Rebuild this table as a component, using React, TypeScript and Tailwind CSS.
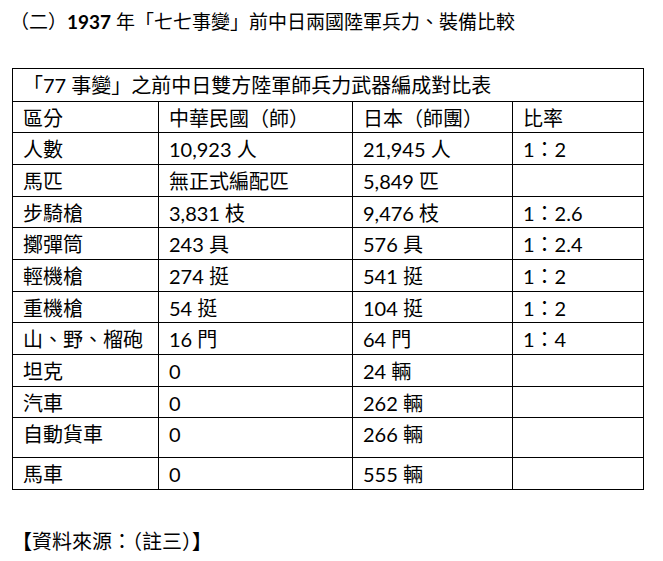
import React from "react";

const rows: [string, string, string, string, string?][] = [
  ["人數", "10,923 人", "21,945 人", "1：2"],
  ["馬匹", "無正式編配匹", "5,849 匹", ""],
  ["步騎槍", "3,831 枝", "9,476 枝", "1：2.6"],
  ["擲彈筒", "243 具", "576 具", "1：2.4"],
  ["輕機槍", "274 挺", "541 挺", "1：2"],
  ["重機槍", "54 挺", "104 挺", "1：2"],
  ["山、野、榴砲", "16 門", "64 門", "1：4"],
  ["坦克", "0", "24 輛", ""],
  ["汽車", "0", "262 輛", ""],
  ["自動貨車", "0", "266 輛", "", "tall"],
  ["馬車", "0", "555 輛", ""],
];

const cell = "border border-black align-top pl-[10px] pt-[4px] leading-[24px] whitespace-nowrap";

export default function App() {
  return (
    <div
      className="min-h-[561px] w-[663px] bg-white text-[20px] text-black pt-[10px] pl-[12px]"
      style={{ fontFamily: 'Lato, "Noto Sans CJK TC", sans-serif' }}
    >
      <div className="leading-[24px] whitespace-nowrap text-[19px] -ml-[2px]">
        （二）<span className="font-bold">1937</span> 年「七七事變」前中日兩國陸軍兵力、裝備比較
      </div>
      <table className="mt-[34px] border-collapse table-fixed w-[631px]">
        <colgroup>
          <col className="w-[146px]" />
          <col className="w-[194px]" />
          <col className="w-[160px]" />
          <col className="w-[131px]" />
        </colgroup>
        <tbody>
          <tr className="h-[32.5px]">
            <td colSpan={4} className={cell}>
              「77 事變」之前中日雙方陸軍師兵力武器編成對比表
            </td>
          </tr>
          <tr className="h-[31.7px]">
            <td className={cell}>區分</td>
            <td className={cell}>中華民國（師）</td>
            <td className={cell}>日本（師團）</td>
            <td className={cell}>比率</td>
          </tr>
          {rows.map((r) => (
            <tr key={r[0]} className={r[4] ? "h-[40px]" : "h-[31.7px]"}>
              <td className={cell}>{r[0]}</td>
              <td className={cell}>{r[1]}</td>
              <td className={cell}>{r[2]}</td>
              <td className={cell}>{r[3]}</td>
            </tr>
          ))}
        </tbody>
      </table>
      <div className="mt-[39px] leading-[24px] whitespace-nowrap">
        <span className="font-bold">【</span>資料來源：（註三）<span className="font-bold">】</span>
      </div>
    </div>
  );
}
